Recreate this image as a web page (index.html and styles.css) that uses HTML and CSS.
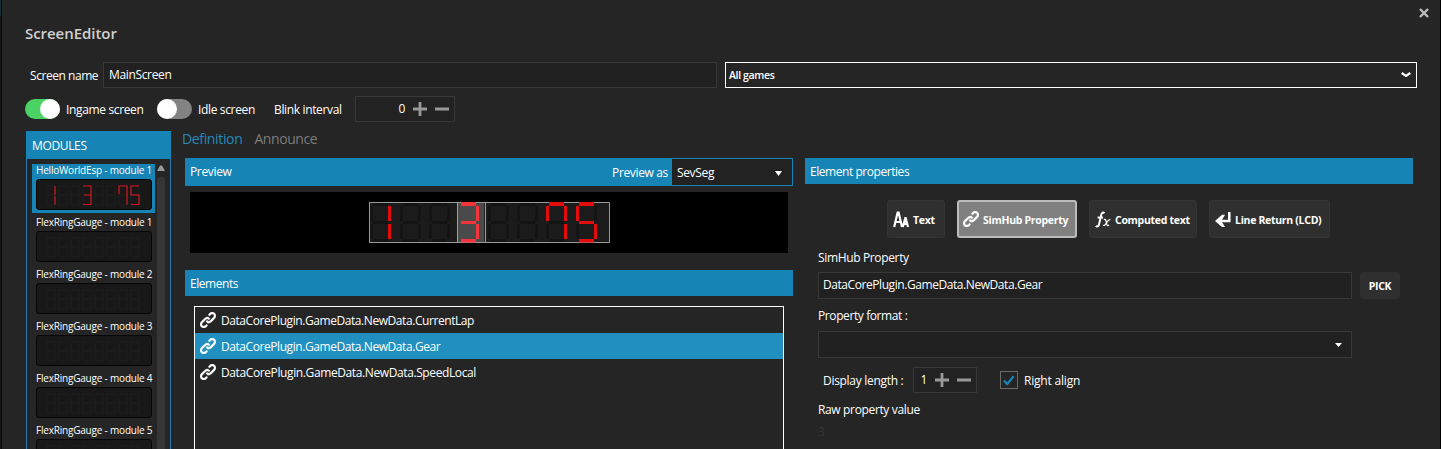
FILE: index.html
```
<!DOCTYPE html>
<html lang="en">
<head>
<meta charset="utf-8">
<title>ScreenEditor</title>
<link rel="stylesheet" href="styles.css">
</head>
<body>
<svg class="defs" aria-hidden="true">
  <defs>
    <g id="sa"><path d="M3 -1h15v4H3z"/></g>
    <g id="sb"><path d="M18 3h3v15h-3z"/></g>
    <g id="sc"><path d="M18 21h3v15h-3z"/></g>
    <g id="sd"><path d="M3 36h15v3.500H3z"/></g>
    <g id="se"><path d="M0 21h3v15H0z"/></g>
    <g id="sf"><path d="M0 3h3v15H0z"/></g>
    <g id="sg"><path d="M3 18h15v3H3z"/></g>
    <g id="d8"><use href="#sa"/><use href="#sb"/><use href="#sc"/><use href="#sd"/><use href="#se"/><use href="#sf"/><use href="#sg"/></g>
    <g id="d1"><use href="#sb"/><use href="#sc"/></g>
    <g id="d3"><use href="#sa"/><use href="#sb"/><use href="#sc"/><use href="#sd"/><use href="#sg"/></g>
    <g id="d7"><use href="#sf"/><use href="#sa"/><use href="#sb"/><use href="#sc"/></g>
    <g id="d5"><use href="#sa"/><use href="#sf"/><use href="#sg"/><use href="#sc"/><use href="#sd"/></g>
    <g id="m8"><path d="M1 1h8v9H1zM1 10h8v10H1z"/></g>
    <g id="blank8"><use href="#m8" x="0"/><use href="#m8" x="12"/><use href="#m8" x="24"/><use href="#m8" x="36"/><use href="#m8" x="48"/><use href="#m8" x="60"/><use href="#m8" x="72"/><use href="#m8" x="84"/></g>
    <symbol id="link" viewBox="2 2 16 16"><path fill="#fff" stroke="#fff" stroke-width=".35" d="M7.859 14.691l-.805.805c-.701.695-1.843.695-2.545 0-.336-.334-.521-.779-.521-1.252s.186-.916.521-1.252l2.980-2.955c.617-.613 1.779-1.515 2.626-.675.389.386 1.016.384 1.403-.005.385-.389.383-1.017-.006-1.402-1.438-1.428-3.566-1.164-5.419.675l-2.980 2.956c-.715.709-1.108 1.654-1.108 2.658 0 1.006.394 1.949 1.108 2.658.736.730 1.702 1.096 2.669 1.096s1.934-.366 2.669-1.096l.805-.797c.389-.385.391-1.012.005-1.400-.386-.389-1.014-.399-1.402-.014zM16.891 3.207c-1.547-1.534-3.709-1.617-5.139-.197l-1.003.999c-.389.386-.390 1.013-.006 1.401s1.013.391 1.402.006l1.003-.998c.748-.743 1.721-.424 2.341.193.336.332.521.778.521 1.251s-.186.917-.521 1.251l-3.181 3.154c-1.455 1.442-2.136.767-2.427.479-.389-.387-1.016-.384-1.401.004-.387.389-.383 1.018.004 1.403.668.662 1.430.990 2.228.990.977 0 2.010-.492 2.993-1.467l3.180-3.153c.712-.710 1.105-1.654 1.105-2.660s-.393-1.950-1.099-2.656z"/></symbol>
  </defs>
</svg>
<div class="window">
  <div class="edge"></div>
  <div class="close"><svg width="10" height="10" viewBox="0 0 10 10"><path d="M1 1l8 8M9 1L1 9" stroke="#bdbdbd" stroke-width="2.4"/></svg></div>
  <h1 class="title">ScreenEditor</h1>
  <div class="name-row">
    <label class="name-label">Screen name</label>
    <div class="field name-field">MainScreen</div>
    <div class="games">All games<svg width="10" height="6" viewBox="0 0 10 6"><path d="M.7 1l4.300 3L9.300 1" fill="none" stroke="#fff" stroke-width="2.200"/></svg></div>
  </div>
  <div class="toggle-row">
    <div class="toggle on"><i></i></div><span class="t-ingame">Ingame screen</span>
    <div class="toggle off"><i></i></div><span class="t-idle">Idle screen</span>
    <span class="t-blink">Blink interval</span>
    <div class="spinner blink"><span>0</span><svg width="36" height="14" viewBox="0 0 36 14"><path d="M0 7h14M7 0v14M22 7h14" stroke="#999" stroke-width="2.800"/></svg></div>
  </div>
  <div class="columns">
    <section class="modules">
      <header>MODULES</header>
      <div class="modules-body">
        <div class="module-list">
          <div class="module selected"><p>HelloWorldEsp - module 1</p><div class="lcd"><svg width="98" height="21" viewBox="0 0 98 21"><use href="#blank8" class="mdim"/><g class="mlit"><path d="M9 1v9M9 11v8.500M37 1h8v18.500h-8M38 10h7M73 9V1h8v18.500M93 1h-8v9h8v9.500h-8"/></g></svg></div></div>
          <div class="module"><p>FlexRingGauge - module 1</p><div class="lcd"><svg width="98" height="21" viewBox="0 0 98 21"><use href="#blank8" class="mdim"/></svg></div></div>
          <div class="module"><p>FlexRingGauge - module 2</p><div class="lcd"><svg width="98" height="21" viewBox="0 0 98 21"><use href="#blank8" class="mdim"/></svg></div></div>
          <div class="module"><p>FlexRingGauge - module 3</p><div class="lcd"><svg width="98" height="21" viewBox="0 0 98 21"><use href="#blank8" class="mdim"/></svg></div></div>
          <div class="module"><p>FlexRingGauge - module 4</p><div class="lcd"><svg width="98" height="21" viewBox="0 0 98 21"><use href="#blank8" class="mdim"/></svg></div></div>
          <div class="module"><p>FlexRingGauge - module 5</p><div class="lcd"><svg width="98" height="21" viewBox="0 0 98 21"><use href="#blank8" class="mdim"/></svg></div></div>
        </div>
        <div class="scroll"><svg width="8" height="6" viewBox="0 0 8 6"><path d="M0 6l3-5.500h2L8 6z" fill="#999"/></svg><div class="thumb"></div></div>
      </div>
    </section>
    <div class="editor">
      <nav class="tabs"><span class="tab active">Definition</span><span class="tab">Announce</span></nav>
      <div class="panes">
        <section class="left">
          <header class="bar preview-bar"><span class="h-preview">Preview</span><span class="as">Preview as</span><div class="as-select">SevSeg<svg width="7" height="5" viewBox="0 0 7 5"><path d="M0 0h7L3.500 5z" fill="#fff"/></svg></div></header>
          <div class="stage">
            <svg width="242" height="42" viewBox="0 0 242 42">
              <rect width="241" height="41" fill="#1b1b1b"/>
              <g fill="#141414"><use href="#d8" x="1" y="1"/><use href="#d8" x="31" y="1"/><use href="#d8" x="60" y="1"/><use href="#d8" x="119" y="1"/><use href="#d8" x="148" y="1"/><use href="#d8" x="177" y="1"/><use href="#d8" x="207" y="1"/></g>
              <path d="M89 0h26v41H89z" fill="#4a4a4a"/>
              <path d="M.5.5h240v40H.5zM116.500 1v40" fill="none" stroke="#999"/><path d="M115.500 1v39" stroke="#222"/>
              <g fill="#e40d0d"><use href="#d1" x="1" y="1"/><use href="#d7" x="177" y="1"/><use href="#d5" x="207" y="1"/></g>
              <use href="#d3" x="89" y="1" fill="#f5333b"/>
              <path d="M88.500 0v41" stroke="#62b4d8"/>
            </svg>
          </div>
          <header class="bar elements-bar"><span class="h-elements">Elements</span></header>
          <div class="list">
            <div class="row"><svg width="16" height="16"><use href="#link"/></svg><span class="path">DataCorePlugin.GameData.NewData.CurrentLap</span></div>
            <div class="row sel"><svg width="16" height="16"><use href="#link"/></svg><span class="path">DataCorePlugin.GameData.NewData.Gear</span></div>
            <div class="row"><svg width="16" height="16"><use href="#link"/></svg><span class="path last">DataCorePlugin.GameData.NewData.SpeedLocal</span></div>
          </div>
        </section>
        <section class="right">
          <header class="bar props-bar"><span class="h-props">Element properties</span></header>
          <div class="kinds">
            <button class="kind k1"><svg width="16" height="17" viewBox="0 0 16 17"><path d="M1.200 16L4.600 1.500h1L9 16M2.200 11h5.600M9.800 16l2.500-9h.4L15 16M10.600 12.800h3.800" fill="none" stroke="#fff" stroke-width="2.200"/></svg><span>Text</span></button>
            <button class="kind k2 active"><svg width="16" height="16"><use href="#link"/></svg><span>SimHub Property</span></button>
            <button class="kind k3"><svg width="16" height="17" viewBox="0 0 16 17"><path d="M9.500 2.200C8.200 1 6.800 1.300 6.300 3.500L4 13.500C3.500 15.700 2 16 .7 15M2.600 6.500h5.400" fill="none" stroke="#fff" stroke-width="1.900"/><path d="M8.800 8.600c1.300-.6 1.900 0 2.300 1.500l.7 3.300c.4 1.300 1.200 1.600 2.300.7M15.300 8.700c-1.200-.6-2 .3-3.700 2.900-1.400 2.300-2.200 3.400-3.500 2.600" fill="none" stroke="#fff" stroke-width="1.300"/></svg><span>Computed text</span></button>
            <button class="kind k4"><svg width="16" height="17" viewBox="0 0 16 17"><path d="M14.300 1v9H4" fill="none" stroke="#fff" stroke-width="2.500"/><path d="M0 10L7 3.800H10L6.300 10L10 16H7z" fill="#fff"/></svg><span>Line Return (LCD)</span></button>
          </div>
          <div class="form">
            <label class="l-prop">SimHub Property</label>
            <div class="pick-row"><div class="field prop-field"><span class="path">DataCorePlugin.GameData.NewData.Gear</span></div><button class="pick">PICK</button></div>
            <label class="l-format">Property format :</label>
            <div class="field combo"><svg width="7" height="4" viewBox="0 0 7 4"><path d="M0 0h7L3.500 4z" fill="#fff"/></svg></div>
            <div class="length-row"><span class="l-length">Display length :</span><div class="spinner len"><span>1</span><svg width="36" height="14" viewBox="0 0 36 14"><path d="M0 7h14M7 0v14M22 7h14" stroke="#999" stroke-width="2.800"/></svg></div><div class="check"><svg width="12" height="11" viewBox="0 0 12 11"><path d="M1 5.500l3.200 3.500L10.700 1.300" fill="none" stroke="#1684b4" stroke-width="2.400"/></svg></div><span class="l-align">Right align</span></div>
            <label class="l-raw">Raw property value</label>
            <div class="raw">3</div>
          </div>
        </section>
      </div>
    </div>
  </div>
</div>
</body>
</html>
```
FILE: styles.css
```
* { box-sizing: border-box; }
body { margin: 0; background: #252525; color: #fff; font: 12px/16px "Open Sans", "Noto Sans", sans-serif; letter-spacing: -0.35px; overflow: hidden; }
span, label { white-space: nowrap; display: block; }
svg { display: block; flex: none; }
p { margin: 0; }
button { font: inherit; color: inherit; letter-spacing: inherit; }
.defs { position: absolute; width: 0; height: 0; }
.window { position: relative; height: 449px; overflow: hidden; border-right: 1px solid #000; padding-left: 25px; }
.edge { position: absolute; left: 0; top: 0; width: 2px; height: 449px; background: linear-gradient(#0d3038 16px, #151515 16px); border-right: 1px solid #080808; }
.close { height: 22px; padding: 8px 11px 0 0; display: flex; justify-content: flex-end; }
.title { margin: 0; height: 40px; font-size: 15px; line-height: 22px; font-weight: 600; color: #d0d0d0; letter-spacing: -0.05px; }
.name-row { display: flex; height: 26px; }
.name-label { width: 78px; padding: 6px 0 0 5px; letter-spacing: -0.45px; }
.field { border: 1px solid #383838; background: #212121; }
.name-field { width: 614px; margin-right: 8px; padding: 4px 5px; }
.games { width: 692px; border: 1px solid #fff; display: flex; align-items: center; justify-content: space-between; padding: 0 5px 0 3px; font-size: 10.5px; font-weight: 600; }
.toggle-row { display: flex; align-items: center; height: 26px; margin-top: 8px; }
.toggle { width: 35px; height: 20px; border-radius: 10px; display: flex; background: #838383; }
.toggle.on { background: #4bd264; justify-content: flex-end; }
.toggle i { width: 20px; height: 20px; border-radius: 50%; background: #fff; }
.toggle-row > span { padding-top: 1px; }
.t-ingame { width: 91px; margin-left: 6px; }
.t-idle { width: 76px; margin-left: 6px; }
.t-blink { width: 81px; }
.spinner { height: 26px; border: 1px solid #383838; background: #222; display: flex; align-items: center; justify-content: flex-end; gap: 8px; }
.blink { width: 100px; padding-right: 5px; }
.columns { display: flex; margin-top: 9px; height: 318px; }
.modules { margin-left: 1px; border: 1px solid #2a7ab0; border-width: 0 1px; width: 145px; }
.modules header { height: 28px; margin: 0 -1px; background: #1684b4; padding: 7px 6px; font-size: 12px; }
.modules-body { display: flex; padding: 5px 0 0 5px; }
.module-list { width: 123px; }
.module { height: 49px; margin-bottom: 3px; padding: 0 4px; font-size: 10px; }
.module.selected { background: #1684b4; }
.module p { height: 15px; line-height: 12px; white-space: nowrap; letter-spacing: -0.2px; font-weight: 500; }
.lcd { width: 116px; height: 31px; border: 1px solid #050505; border-radius: 3px; background: #181818; padding: 5px 0 0 9px; }
.mdim { fill: none; stroke: #1e1e1e; stroke-width: 1; }
.mlit { fill: none; stroke: #d31824; stroke-width: 1.2; }
.scroll { width: 8px; margin-left: 2px; padding-top: 1px; }
.thumb { width: 8px; height: 300px; margin-top: 6px; border-radius: 4px; background: #363636; }
.editor { margin-left: 14px; width: 1230px; }
.tabs { display: flex; gap: 12px; height: 27px; margin-left: -3px; font-size: 14px; line-height: 15px; color: #7c7c7c; }
.tab { letter-spacing: -0.42px; }
.tab.active { color: #2588b8; letter-spacing: -0.35px; }
.panes { display: flex; gap: 12px; }
.left { width: 608px; }
.right { width: 608px; }
.bar { background: #1684b4; height: 26px; display: flex; align-items: center; padding-left: 5px; }
.h-props { letter-spacing: -0.45px; padding-top: 1px; }
.h-elements { letter-spacing: -0.45px; padding-top: 1px; }
.preview-bar { height: 28px; padding-right: 1px; }
.as { margin-left: auto; margin-right: 4px; padding-top: 2px; }
.as-select { width: 120px; height: 26px; background: #222; display: flex; align-items: center; justify-content: space-between; padding: 2px 10px 0 5px; }
.stage { margin: 6px 5px 17px; height: 61px; background: #000; padding: 10px 0 0 179px; }
.list { margin: 10px 9px 0; height: 150px; border: 1px solid #fff; }
.row { height: 26px; display: flex; align-items: center; gap: 5px; padding-left: 5px; }
.row .path { padding-top: 2px; }
.path { letter-spacing: -0.43px; }
.path.last { letter-spacing: -0.39px; }
.row.sel { background: #2190c0; }
.kinds { display: flex; gap: 12px; padding: 16px 0 0 82px; }
.kind { height: 38px; border: 1px solid #343434; border-radius: 3px; background: #2f2f2f; padding: 0 0 0 5px; display: flex; align-items: center; gap: 4px; font-weight: 700; font-size: 10.5px; letter-spacing: -0.3px; }
.kind span { padding-top: 1px; }
.kind.active { background: #808080; border: 2px solid #bcbcbc; padding-left: 4px; }
.k1 { width: 58px; }
.k2 { width: 120px; }
.k3 { width: 108px; }
.k4 { width: 121px; }
.form { padding: 12px 0 0 13px; }
.pick-row { display: flex; gap: 8px; margin-top: 6px; height: 27px; }
.prop-field { width: 534px; padding: 4px 5px 4px 4px; }
.pick { width: 40px; border: 0; border-radius: 3px; background: #2f2f2f; padding: 0; font-size: 10.5px; font-weight: 700; }
.l-format { margin-top: 9px; letter-spacing: -0.4px; }
.combo { width: 534px; height: 27px; margin-top: 7px; display: flex; justify-content: flex-end; align-items: center; padding-right: 9px; }
.length-row { display: flex; align-items: center; margin-top: 9px; height: 26px; }
.l-length { width: 95px; padding-left: 5px; padding-top: 2px; letter-spacing: -0.3px; }
.len { width: 64px; padding-right: 5px; }
.check { width: 18px; height: 18px; border: 1px solid #6a6a6a; margin: 0 6px 0 23px; display: grid; place-items: center; }
.l-align { padding-top: 2px; letter-spacing: -0.2px; }
.l-raw { margin-top: 9px; }
.raw { margin-top: 6px; color: #363636; }
```
